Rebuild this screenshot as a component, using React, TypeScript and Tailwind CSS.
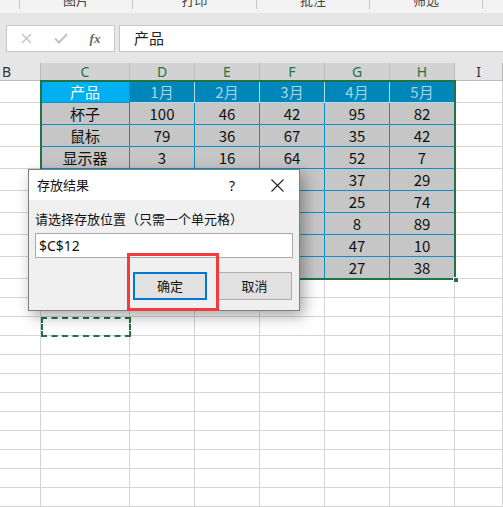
import React from 'react';

const COLS = [41, 89, 65, 65, 65, 65, 65, 48];
const LETTERS = ['B', 'C', 'D', 'E', 'F', 'G', 'H', 'I'];

const TABLE: string[][] = [
  ['产品', '1月', '2月', '3月', '4月', '5月'],
  ['杯子', '100', '46', '42', '95', '82'],
  ['鼠标', '79', '36', '67', '35', '42'],
  ['显示器', '3', '16', '64', '52', '7'],
  ['键盘', '58', '21', '19', '37', '29'],
  ['耳机', '12', '66', '45', '25', '74'],
  ['音箱', '33', '90', '23', '8', '89'],
  ['台灯', '71', '14', '57', '47', '10'],
  ['插座', '26', '48', '35', '27', '38'],
];

const EMPTY_ROWS = 12;

const App: React.FC = () => {
  const font = "font-['Noto_Sans_CJK_SC','Noto_Sans',sans-serif]";

  return (
    <div className={`relative w-[503px] h-[507px] overflow-hidden bg-white ${font}`}>
      {/* Ribbon bottom */}
      <div className="h-[13px] bg-[#f3f3f3] flex overflow-hidden text-[13px] text-[#444] leading-[16px]">
        <div className="w-[20px] border-r border-[#c8c8c8] h-[9px]" />
        <div className="w-[113px] border-r border-[#c8c8c8] h-[9px] flex justify-center"><span className="-mt-[8px]">图片</span></div>
        <div className="w-[124px] border-r border-[#c8c8c8] h-[9px] flex justify-center"><span className="-mt-[8px]">打印</span></div>
        <div className="w-[113px] border-r border-[#c8c8c8] h-[9px] flex justify-center"><span className="-mt-[8px]">批注</span></div>
        <div className="w-[113px] border-r border-[#c8c8c8] h-[9px] flex justify-center"><span className="-mt-[8px]">筛选</span></div>
      </div>

      {/* Formula bar */}
      <div className="h-[50px] bg-[#e6e6e6] pt-[12px] pl-[6px] flex gap-[4px]">
        <div className="w-[109px] h-[27px] bg-white border border-[#c6c6c6] flex items-center">
          <span className="w-[38px] flex justify-center">
            <svg width="11" height="11" viewBox="0 0 11 11">
              <path d="M1 1L10 10M10 1L1 10" stroke="#c2c2c2" strokeWidth="1.4" />
            </svg>
          </span>
          <span className="w-[32px] flex justify-center">
            <svg width="14" height="11" viewBox="0 0 14 11">
              <path d="M1 5.5L5 9.5L13 1" fill="none" stroke="#c2c2c2" strokeWidth="2" />
            </svg>
          </span>
          <span className="w-[36px] text-center text-[13px] italic font-bold text-[#666] font-['Liberation_Serif',serif]">fx</span>
        </div>
        <div className="flex-1 h-[27px] bg-white border border-[#c6c6c6] border-r-0 flex items-center pl-[14px] text-[15px] text-[#222]">
          产品
        </div>
      </div>

      {/* Column headers */}
      <div className="flex h-[18px] text-[14px] leading-[17px]">
        {LETTERS.map((l, i) => {
          const sel = i >= 1 && i <= 6;
          return (
            <div
              key={l}
              style={{ width: COLS[i] }}
              className={`${sel ? 'bg-[#d2d2d2] text-[#217346]' : 'bg-[#e6e6e6] text-[#333]'} ${i === 0 ? 'pl-[2px] text-left' : 'text-center'} border-r border-[#bcbcbc] border-b border-b-[#bcbcbc] font-['Noto_Sans',sans-serif]`}
            >
              {l}
            </div>
          );
        })}
      </div>

      {/* Sheet grid */}
      <div className="flex flex-col">
        {TABLE.map((row, r) => (
          <div key={r} className="flex h-[22px]">
            {COLS.map((w, c) => {
              const inTable = c >= 1 && c <= 6;
              let cls = 'bg-white border-r border-b border-[#d4d4d4]';
              if (inTable) {
                if (r === 0 && c === 1) cls = 'bg-[#00b0f0] text-white border-r border-b border-[#0b90c6]';
                else if (r === 0) cls = 'bg-[#0087b9] text-[#a9d3e4] border-r border-b border-[#b4dbe9]';
                else cls = 'bg-[#c6c6c6] text-[#111] border-r border-b border-[#0b8fc6]';
              }
              return (
                <div
                  key={c}
                  style={{ width: w }}
                  className={`${cls} flex items-center justify-center text-[15px] leading-none`}
                >
                  {inTable ? row[c - 1] : ''}
                </div>
              );
            })}
          </div>
        ))}
        {Array.from({ length: EMPTY_ROWS }).map((_, r) => (
          <div key={`e${r}`} className="flex h-[19px]">
            {COLS.map((w, c) => (
              <div key={c} style={{ width: w }} className="bg-white border-r border-b border-[#d4d4d4]" />
            ))}
          </div>
        ))}
      </div>

      {/* Selection border */}
      <div className="absolute left-[40px] top-[80px] w-[416px] h-[200px] border-2 border-[#217346] pointer-events-none" />
      <div className="absolute left-[453px] top-[277px] w-[6px] h-[6px] bg-[#217346] border border-white" />

      {/* Marching ants target */}
      <div className="absolute left-[41px] top-[317px] w-[90px] h-[20px] border-2 border-dashed border-[#217346]" />

      {/* Dialog */}
      <div className="absolute left-[28px] top-[169px] w-[272px] h-[142px] border border-[#7f7f7f] bg-[#f0f0f0] shadow-[4px_5px_14px_rgba(0,0,0,0.35)] flex flex-col">
        <div className="h-[30px] bg-white flex items-center text-[13px] text-[#111]">
          <span className="pl-[8px] flex-1">存放结果</span>
          <span className="w-[20px] text-center text-[14px] font-['Noto_Sans',sans-serif]">?</span>
          <span className="w-[13px]" />
          <span className="w-[44px] flex justify-center">
            <svg width="13" height="13" viewBox="0 0 13 13">
              <path d="M0.5 0.5L12.5 12.5M12.5 0.5L0.5 12.5" stroke="#222" strokeWidth="1.1" />
            </svg>
          </span>
        </div>
        <div className="flex flex-col px-[6px] pt-[10px]">
          <div className="text-[13px] text-[#111] leading-[18px]">请选择存放位置（只需一个单元格）</div>
          <div className="mt-[5px] h-[25px] bg-white border border-[#ababab] flex items-center pl-[3px] text-[14px] text-[#111] font-['Noto_Sans',sans-serif]">
            $C$12
          </div>
          <div className="mt-[14px] flex justify-end gap-[10px] pr-[1px]">
            <button className="w-[74px] h-[28px] bg-[#e1e1e1] border-2 border-[#0078d7] text-[13px] text-[#111]">确定</button>
            <button className="w-[75px] h-[28px] bg-[#e1e1e1] border border-[#adadad] text-[13px] text-[#111]">取消</button>
          </div>
        </div>
      </div>

      {/* Red highlight */}
      <div className="absolute left-[127px] top-[253px] w-[92px] h-[58px] border-[3px] border-[#f33b3b] pointer-events-none" />
    </div>
  );
};

export default App;
